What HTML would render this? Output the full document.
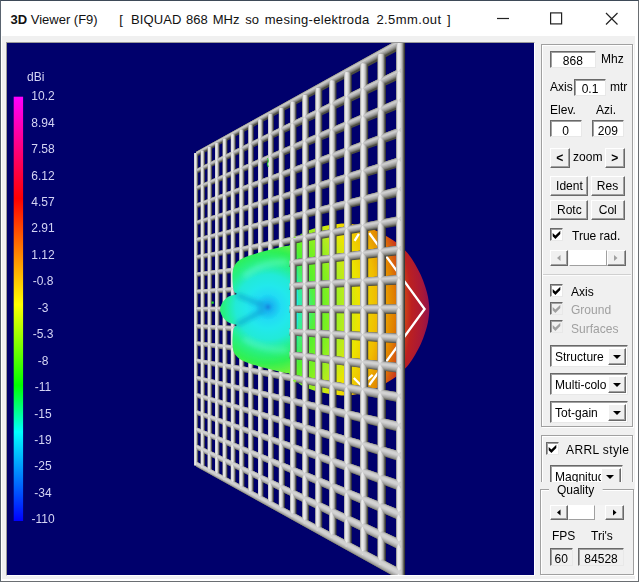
<!DOCTYPE html><html><head><meta charset="utf-8"><title>3D Viewer (F9)</title><style>
*{box-sizing:border-box;margin:0;padding:0}
html,body{width:639px;height:582px;overflow:hidden;background:#fff}
body{position:relative;font-family:"Liberation Sans",sans-serif;font-size:12px;color:#000}
.abs{position:absolute}
#win{position:absolute;left:0;top:0;width:639px;height:582px;border:1px solid #6a6e72;border-top-color:#3e4a58;border-left-color:#5a6470;background:#fff}
#client{position:absolute;left:1px;top:35px;width:633px;height:543px;background:#f0f0f0}
#title{position:absolute;top:9px;left:0;height:20px;line-height:20px;font-size:13px;white-space:pre;color:#111}
#title span{position:absolute;top:0;white-space:pre}
#vp{position:absolute;left:6px;top:42px;width:529px;height:534px;border:1px solid;border-color:#9a9a9a #fff #fff #9a9a9a;background:#00006c;overflow:hidden}
#vp svg{position:absolute;left:-7px;top:-43px}
.lg{position:absolute;color:#d4d4f4;font-size:13px;line-height:14px;height:14px;width:60px;text-align:center;left:13px;white-space:pre;transform:scaleX(.925)}
.frame{position:absolute;border:1px solid #a0a0a0;box-shadow:1px 1px 0 #fff, inset 1px 1px 0 #fff}
.tf{position:absolute;background:#fff;border:1px solid;border-color:#696969 #e8e8e8 #e8e8e8 #696969;box-shadow:inset 1px 1px 0 #a0a0a0;text-align:center;font-size:13px;line-height:15px;padding-top:1px;white-space:pre}
.sx{display:inline-block;transform:scaleX(.925)}
.tf.g{background:#f0f0f0}
.lb{position:absolute;font-size:13px;line-height:14px;height:14px;white-space:pre;transform:scaleX(.925);transform-origin:0 0}
.btn{position:absolute;background:#f0f0f0;border:1px solid;border-color:#fff #696969 #696969 #fff;box-shadow:inset -1px -1px 0 #a0a0a0;text-align:center;font-size:13px;white-space:pre}
.cb{position:absolute;width:13px;height:13px;background:#fff;border:1px solid;border-color:#696969 #e8e8e8 #e8e8e8 #696969;box-shadow:inset 1px 1px 0 #a0a0a0}
.cb.d{background:#f0f0f0}
.cb svg{position:absolute;left:1px;top:1px}
.dis{color:#a0a0a0}
.combo{position:absolute;background:#fff;border:1px solid;border-color:#696969 #e8e8e8 #e8e8e8 #696969;box-shadow:inset 1px 1px 0 #a0a0a0;font-size:12px;white-space:pre;overflow:hidden}
.combo .t{position:absolute;left:4px;top:4px;line-height:14px;font-size:13px;transform:scaleX(.925);transform-origin:0 0}
.combo .b{position:absolute;right:1px;top:2px;bottom:1px;width:18px;background:#f0f0f0;border:1px solid;border-color:#fff #696969 #696969 #fff;box-shadow:inset -1px -1px 0 #a0a0a0}
.combo .b:after{content:"";position:absolute;left:4px;top:6px;border:4px solid transparent;border-top:4px solid #000;border-bottom:0}
.sb{position:absolute;background:#f4f4f4}
.sb .a{position:absolute;top:0;bottom:0;background:#f0f0f0;border:1px solid;border-color:#fff #696969 #696969 #fff;box-shadow:inset -1px -1px 0 #a0a0a0}
.sb .th{position:absolute;top:0;bottom:0;background:#fff;border:1px solid;border-color:#fff #a0a0a0 #a0a0a0 #fff}
</style></head><body>
<div id="win">
<div id="title"><span style="left:9.5px"><b>3D</b> Viewer (F9)</span><span style="left:118.2px">[</span><span style="left:130px;letter-spacing:0.1px">BIQUAD</span><span style="left:185px">868</span><span style="left:211.7px">MHz</span><span style="left:244.3px">so</span><span style="left:263.7px;letter-spacing:0.32px">mesing-elektroda</span><span style="left:375.4px;letter-spacing:0.41px">2.5mm.out</span><span style="left:446px">]</span></div>
<svg class="abs" style="left:478.8px;top:-0.5px" width="158" height="36" viewBox="480 1 158 36"><path d="M497 18.5H509" stroke="#222" stroke-width="1.2"/><rect x="550.6" y="12.9" width="11" height="11" fill="none" stroke="#222" stroke-width="1.2"/><path d="M606 13L617.5 24.5M617.5 13L606 24.5" stroke="#222" stroke-width="1.2"/></svg>
<div id="client"></div>
</div>
<div id="vp">
<svg width="639" height="582" viewBox="0 0 639 582">
<defs><linearGradient id="lgd" x1="0" y1="0" x2="0" y2="1"><stop offset="0" stop-color="#ff00ff"/><stop offset="0.24" stop-color="#ff0000"/><stop offset="0.49" stop-color="#ffff00"/><stop offset="0.68" stop-color="#00ff00"/><stop offset="0.79" stop-color="#00ffff"/><stop offset="1" stop-color="#0000ff"/></linearGradient><radialGradient id="ball" gradientUnits="userSpaceOnUse" cx="200" cy="309.5" r="230"><stop offset="0.43" stop-color="#30e8b0"/><stop offset="0.49" stop-color="#50f030"/><stop offset="0.56" stop-color="#80f020"/><stop offset="0.62" stop-color="#b0ec20"/><stop offset="0.69" stop-color="#ece400"/><stop offset="0.77" stop-color="#f0bc00"/><stop offset="0.845" stop-color="#e08000"/><stop offset="0.885" stop-color="#d04818"/><stop offset="0.92" stop-color="#bc2020"/><stop offset="0.97" stop-color="#a81838"/><stop offset="1" stop-color="#901050"/></radialGradient><radialGradient id="org" gradientUnits="userSpaceOnUse" cx="272" cy="307" r="50"><stop offset="0" stop-color="#20e0e8"/><stop offset="0.5" stop-color="#28e8c0"/><stop offset="0.75" stop-color="#40f080" stop-opacity="0.7"/><stop offset="1" stop-color="#60f040" stop-opacity="0"/></radialGradient><radialGradient id="bk" gradientUnits="userSpaceOnUse" cx="268" cy="307" r="72"><stop offset="0" stop-color="#1488e0"/><stop offset="0.06" stop-color="#18b4f0"/><stop offset="0.18" stop-color="#20dcf4"/><stop offset="0.3" stop-color="#22e8ec"/><stop offset="0.45" stop-color="#22ead8"/><stop offset="0.61" stop-color="#26f088"/><stop offset="0.78" stop-color="#30f052"/><stop offset="1" stop-color="#88f030"/></radialGradient><filter id="b0" x="-2%" y="-2%" width="104%" height="104%"><feGaussianBlur stdDeviation="0.45"/></filter><filter id="b1" x="-10%" y="-10%" width="120%" height="120%"><feGaussianBlur stdDeviation="0.7"/></filter><filter id="b3" x="-30%" y="-30%" width="160%" height="160%"><feGaussianBlur stdDeviation="2.5"/></filter></defs>
<rect x="13.7" y="96.7" width="9.4" height="424.3" fill="url(#lgd)"/>
<path d="M293 252C293.3 231 293.7 244 295 241C296.3 238 298.1 236 301 234C303.9 232 307.7 230.5 312.5 229C317.3 227.5 324.6 225.9 330 225C335.4 224.1 340.3 223.5 345 223.5C349.7 223.5 354.2 224.3 358 225C361.8 225.7 364.6 226.4 368 227.5C371.4 228.6 375.1 230 378.3 231.5C381.5 233 384.2 234.8 387 236.5C389.8 238.2 392.5 239.7 395 241.5C397.5 243.3 399.7 245.3 402 247.5C404.3 249.7 406.5 251.8 408.7 254.5C410.9 257.2 413 260.6 415 264C417 267.4 419.1 271.3 420.8 275C422.5 278.7 423.8 282.3 425 286C426.2 289.7 427.3 293.1 428 297C428.7 300.9 429.3 305.3 429.3 309.5C429.3 313.7 428.7 318.1 428 322C427.3 325.9 426.2 329.3 425 333C423.8 336.7 422.5 340.3 420.8 344C419.1 347.7 417 351.6 415 355C413 358.4 410.9 361.8 408.7 364.5C406.5 367.2 404.3 369.3 402 371.5C399.7 373.7 397.5 375.7 395 377.5C392.5 379.3 389.8 380.8 387 382.5C384.2 384.2 381.5 386 378.3 387.5C375.1 389 371.4 390.4 368 391.5C364.6 392.6 361.8 393.3 358 394C354.2 394.7 349.7 395.5 345 395.5C340.3 395.5 335.4 394.9 330 394C324.6 393.1 317.3 391.5 312.5 390C307.7 388.5 303.9 387 301 385C298.1 383 296.3 381 295 378C293.7 375 293.3 388 293 367C292.7 346 292.7 273 293 252Z" fill="url(#ball)"/>
<path d="M293 252C293.3 231 293.7 244 295 241C296.3 238 298.1 236 301 234C303.9 232 307.7 230.5 312.5 229C317.3 227.5 324.6 225.9 330 225C335.4 224.1 340.3 223.5 345 223.5C349.7 223.5 354.2 224.3 358 225C361.8 225.7 364.6 226.4 368 227.5C371.4 228.6 375.1 230 378.3 231.5C381.5 233 384.2 234.8 387 236.5C389.8 238.2 392.5 239.7 395 241.5C397.5 243.3 399.7 245.3 402 247.5C404.3 249.7 406.5 251.8 408.7 254.5C410.9 257.2 413 260.6 415 264C417 267.4 419.1 271.3 420.8 275C422.5 278.7 423.8 282.3 425 286C426.2 289.7 427.3 293.1 428 297C428.7 300.9 429.3 305.3 429.3 309.5C429.3 313.7 428.7 318.1 428 322C427.3 325.9 426.2 329.3 425 333C423.8 336.7 422.5 340.3 420.8 344C419.1 347.7 417 351.6 415 355C413 358.4 410.9 361.8 408.7 364.5C406.5 367.2 404.3 369.3 402 371.5C399.7 373.7 397.5 375.7 395 377.5C392.5 379.3 389.8 380.8 387 382.5C384.2 384.2 381.5 386 378.3 387.5C375.1 389 371.4 390.4 368 391.5C364.6 392.6 361.8 393.3 358 394C354.2 394.7 349.7 395.5 345 395.5C340.3 395.5 335.4 394.9 330 394C324.6 393.1 317.3 391.5 312.5 390C307.7 388.5 303.9 387 301 385C298.1 383 296.3 381 295 378C293.7 375 293.3 388 293 367C292.7 346 292.7 273 293 252Z" fill="url(#org)"/>
<path d="M369.2 233L424.6 309L369.2 385M354.6 240.8L358.9 233.9M353.8 378L360.7 385L372.7 374.8" stroke="#ffffff" stroke-width="2.3" fill="none" stroke-linejoin="miter"/>
<g id="grid" filter="url(#b0)"><path d="M194.16 153.2H198.16V465.2H194.16ZM200.8 150.77H204.95V467.63H200.8ZM207.76 146.96H212.07V471.44H207.76ZM215.08 142.95H219.56V475.45H215.08ZM222.78 138.74H227.43V479.66H222.78ZM230.89 134.31H235.72V484.09H230.89ZM239.44 129.63H244.47V488.77H239.44ZM248.47 124.68H253.71V493.72H248.47ZM258.03 119.46H263.48V498.94H258.03ZM268.16 113.91H273.84V504.49H268.16ZM278.91 108.03H284.84V510.37H278.91ZM290.34 101.78H296.53V516.62H290.34ZM302.52 95.12H308.98V523.28H302.52ZM315.52 88H322.28V530.4H315.52ZM329.44 80.39H336.52V538.01H329.44ZM344.37 72.22H351.78V546.18H344.37ZM360.42 63.44H368.2V554.96H360.42ZM377.73 53.97H385.9V564.43H377.73ZM396.45 41.15H405.05V577.25H396.45Z" fill="#3e3e38"/>
<path d="M196.16 151.85L400.75 38.25L400.75 49.2L196.16 156.95ZM196.16 169.11L400.75 67.88L400.75 78.57L196.16 174.09ZM196.16 186.37L400.75 97.5L400.75 107.94L196.16 191.23ZM196.16 203.62L400.75 127.1L400.75 137.34L196.16 208.38ZM196.16 220.86L400.75 156.69L400.75 166.74L196.16 225.54ZM196.16 238.1L400.75 186.26L400.75 196.16L196.16 242.7ZM196.16 255.32L400.75 215.81L400.75 225.6L196.16 259.88ZM196.16 272.54L400.75 245.36L400.75 255.06L196.16 277.06ZM196.16 289.76L400.75 274.88L400.75 284.53L196.16 294.24ZM196.16 306.96L400.75 304.38L400.75 314.02L196.16 311.44ZM196.16 324.16L400.75 333.87L400.75 343.52L196.16 328.64ZM196.16 341.34L400.75 363.34L400.75 373.04L196.16 345.86ZM196.16 358.52L400.75 392.8L400.75 402.59L196.16 363.08ZM196.16 375.7L400.75 422.24L400.75 432.14L196.16 380.3ZM196.16 392.86L400.75 451.66L400.75 461.71L196.16 397.54ZM196.16 410.02L400.75 481.06L400.75 491.3L196.16 414.78ZM196.16 427.17L400.75 510.46L400.75 520.9L196.16 432.03ZM196.16 444.31L400.75 539.83L400.75 550.52L196.16 449.29ZM196.16 461.45L400.75 569.2L400.75 580.15L196.16 466.55Z" fill="#4a4a40"/>
<path d="M194.16 153.2H197.64V465.2H194.16ZM200.8 150.77H204.41V467.63H200.8ZM207.76 146.96H211.51V471.44H207.76ZM215.08 142.95H218.98V475.45H215.08ZM222.78 138.74H226.83V479.66H222.78ZM230.89 134.31H235.1V484.09H230.89ZM239.44 129.63H243.82V488.77H239.44ZM248.47 124.68H253.03V493.72H248.47ZM258.03 119.46H262.78V498.94H258.03ZM268.16 113.91H273.1V504.49H268.16ZM278.91 108.03H284.06V510.37H278.91ZM290.34 101.78H295.72V516.62H290.34ZM302.52 95.12H308.14V523.28H302.52ZM315.52 88H321.4V530.4H315.52ZM329.44 80.39H335.6V538.01H329.44ZM344.37 72.22H350.82V546.18H344.37ZM360.42 63.44H367.19V554.96H360.42ZM377.73 53.97H384.84V564.43H377.73ZM396.45 41.15H403.93V577.25H396.45Z" fill="#6a6a64"/>
<path d="M196.16 151.85L400.75 38.25L400.75 46.38L196.16 155.63ZM196.16 169.11L400.75 67.88L400.75 76.04L196.16 172.91ZM196.16 186.37L400.75 97.5L400.75 105.69L196.16 190.18ZM196.16 203.62L400.75 127.1L400.75 135.35L196.16 207.46ZM196.16 220.86L400.75 156.69L400.75 165L196.16 224.73ZM196.16 238.1L400.75 186.26L400.75 194.66L196.16 242ZM196.16 255.32L400.75 215.81L400.75 224.32L196.16 259.28ZM196.16 272.54L400.75 245.36L400.75 253.99L196.16 276.56ZM196.16 289.76L400.75 274.88L400.75 283.67L196.16 293.85ZM196.16 306.96L400.75 304.38L400.75 313.36L196.16 311.14ZM196.16 324.16L400.75 333.87L400.75 343.07L196.16 328.43ZM196.16 341.34L400.75 363.34L400.75 372.8L196.16 345.74ZM196.16 358.52L400.75 392.8L400.75 402.44L196.16 363.01ZM196.16 375.7L400.75 422.24L400.75 431.99L196.16 380.23ZM196.16 392.86L400.75 451.66L400.75 461.56L196.16 397.47ZM196.16 410.02L400.75 481.06L400.75 491.15L196.16 414.71ZM196.16 427.17L400.75 510.46L400.75 520.75L196.16 431.96ZM196.16 444.31L400.75 539.83L400.75 550.36L196.16 449.21ZM196.16 461.45L400.75 569.2L400.75 579.99L196.16 466.47Z" fill="#6e6e68"/>
<path d="M194.16 153.2H197.24V465.2H194.16ZM200.8 150.77H203.99V467.63H200.8ZM207.76 146.96H211.08V471.44H207.76ZM215.08 142.95H218.53V475.45H215.08ZM222.78 138.74H226.36V479.66H222.78ZM230.89 134.31H234.61V484.09H230.89ZM239.44 129.63H243.31V488.77H239.44ZM248.47 124.68H252.51V493.72H248.47ZM258.03 119.46H262.23V498.94H258.03ZM268.16 113.91H272.53V504.49H268.16ZM278.91 108.03H283.47V510.37H278.91ZM290.34 101.78H295.1V516.62H290.34ZM302.52 95.12H307.5V523.28H302.52ZM315.52 88H320.73V530.4H315.52ZM329.44 80.39H334.89V538.01H329.44ZM344.37 72.22H350.08V546.18H344.37ZM360.42 63.44H366.41V554.96H360.42ZM377.73 53.97H384.02V564.43H377.73ZM396.45 41.15H403.07V577.25H396.45Z" fill="#94948f"/>
<path d="M196.16 151.85L400.75 38.25L400.75 45.17L196.16 155.07ZM196.16 169.11L400.75 67.88L400.75 74.86L196.16 172.36ZM196.16 186.37L400.75 97.5L400.75 104.54L196.16 189.65ZM196.16 203.62L400.75 127.1L400.75 134.22L196.16 206.93ZM196.16 220.86L400.75 156.69L400.75 163.89L196.16 224.21ZM196.16 238.1L400.75 186.26L400.75 193.57L196.16 241.5ZM196.16 255.32L400.75 215.81L400.75 223.24L196.16 258.78ZM196.16 272.54L400.75 245.36L400.75 252.92L196.16 276.06ZM196.16 289.76L400.75 274.88L400.75 282.61L196.16 293.35ZM196.16 306.96L400.75 304.38L400.75 312.3L196.16 310.64ZM196.16 324.16L400.75 333.87L400.75 342.01L196.16 327.94ZM196.16 341.34L400.75 363.34L400.75 371.73L196.16 345.24ZM196.16 358.52L400.75 392.8L400.75 401.46L196.16 362.56ZM196.16 375.7L400.75 422.24L400.75 431.22L196.16 379.87ZM196.16 392.86L400.75 451.66L400.75 460.99L196.16 397.2ZM196.16 410.02L400.75 481.06L400.75 490.78L196.16 414.54ZM196.16 427.17L400.75 510.46L400.75 520.59L196.16 431.88ZM196.16 444.31L400.75 539.83L400.75 550.36L196.16 449.21ZM196.16 461.45L400.75 569.2L400.75 579.99L196.16 466.47Z" fill="#8c8c86"/>
<path d="M194.16 153.2H196.84V465.2H194.16ZM200.8 150.77H203.58V467.63H200.8ZM207.76 146.96H210.65V471.44H207.76ZM215.08 142.95H218.08V475.45H215.08ZM222.78 138.74H225.9V479.66H222.78ZM230.89 134.31H234.13V484.09H230.89ZM239.44 129.63H242.81V488.77H239.44ZM248.47 124.68H251.98V493.72H248.47ZM258.03 119.46H261.68V498.94H258.03ZM268.16 113.91H271.97V504.49H268.16ZM278.91 108.03H282.88V510.37H278.91ZM290.34 101.78H294.48V516.62H290.34ZM302.52 95.12H306.85V523.28H302.52ZM315.52 88H320.05V530.4H315.52ZM329.44 80.39H334.18V538.01H329.44ZM344.37 72.22H349.34V546.18H344.37ZM360.42 63.44H365.63V554.96H360.42ZM377.73 53.97H383.21V564.43H377.73ZM396.45 41.15H402.21V577.25H396.45Z" fill="#bcbcba"/>
<path d="M196.16 151.93L400.75 38.41L400.75 43.97L196.16 154.51ZM196.16 169.19L400.75 68.04L400.75 73.69L196.16 171.82ZM196.16 186.44L400.75 97.65L400.75 103.39L196.16 189.11ZM196.16 203.69L400.75 127.25L400.75 133.09L196.16 206.41ZM196.16 220.93L400.75 156.84L400.75 162.79L196.16 223.7ZM196.16 238.17L400.75 186.41L400.75 192.48L196.16 240.99ZM196.16 255.39L400.75 215.96L400.75 222.17L196.16 258.28ZM196.16 272.61L400.75 245.5L400.75 251.85L196.16 275.57ZM196.16 289.82L400.75 275.02L400.75 281.55L196.16 292.86ZM196.16 307.03L400.75 304.53L400.75 311.24L196.16 310.15ZM196.16 324.22L400.75 334.02L400.75 340.95L196.16 327.45ZM196.16 341.41L400.75 363.49L400.75 370.66L196.16 344.75ZM196.16 358.59L400.75 392.94L400.75 400.39L196.16 362.05ZM196.16 375.77L400.75 422.38L400.75 430.13L196.16 379.37ZM196.16 392.93L400.75 451.81L400.75 459.88L196.16 396.69ZM196.16 410.09L400.75 481.22L400.75 489.65L196.16 414.01ZM196.16 427.24L400.75 510.61L400.75 519.44L196.16 431.35ZM196.16 444.39L400.75 539.99L400.75 549.25L196.16 448.69ZM196.16 461.53L400.75 569.36L400.75 579.08L196.16 466.05Z" fill="#a4a4a2"/>
<path d="M194.32 153.2H196.36V465.2H194.32ZM200.96 150.77H203.08V467.63H200.96ZM207.94 146.96H210.13V471.44H207.94ZM215.26 142.95H217.54V475.45H215.26ZM222.97 138.74H225.34V479.66H222.97ZM231.08 134.31H233.55V484.09H231.08ZM239.64 129.63H242.21V488.77H239.64ZM248.68 124.68H251.35V493.72H248.68ZM258.25 119.46H261.03V498.94H258.25ZM268.39 113.91H271.28V504.49H268.39ZM279.14 108.03H282.17V510.37H279.14ZM290.59 101.78H293.74V516.62H290.59ZM302.78 95.12H306.07V523.28H302.78ZM315.79 88H319.24V530.4H315.79ZM329.72 80.39H333.33V538.01H329.72ZM344.66 72.22H348.45V546.18H344.66ZM360.73 63.44H364.7V554.96H360.73ZM378.06 53.97H382.23V564.43H378.06ZM396.79 41.15H401.18V577.25H396.79Z" fill="#d6d6d6"/>
<path d="M196.16 152.16L400.75 38.91L400.75 42.66L196.16 153.9ZM196.16 169.41L400.75 68.52L400.75 72.4L196.16 171.22ZM196.16 186.66L400.75 98.12L400.75 102.14L196.16 188.53ZM196.16 203.9L400.75 127.71L400.75 131.86L196.16 205.84ZM196.16 221.14L400.75 157.29L400.75 161.58L196.16 223.14ZM196.16 238.37L400.75 186.85L400.75 191.29L196.16 240.44ZM196.16 255.6L400.75 216.4L400.75 220.99L196.16 257.73ZM196.16 272.81L400.75 245.94L400.75 250.69L196.16 275.03ZM196.16 290.03L400.75 275.46L400.75 280.39L196.16 292.32ZM196.16 307.23L400.75 304.96L400.75 310.09L196.16 309.61ZM196.16 324.43L400.75 334.45L400.75 339.79L196.16 326.91ZM196.16 341.61L400.75 363.93L400.75 369.5L196.16 344.21ZM196.16 358.8L400.75 393.38L400.75 399.21L196.16 361.51ZM196.16 375.97L400.75 422.83L400.75 428.94L196.16 378.81ZM196.16 393.14L400.75 452.26L400.75 458.67L196.16 396.13ZM196.16 410.3L400.75 481.68L400.75 488.42L196.16 413.44ZM196.16 427.46L400.75 511.08L400.75 518.19L196.16 430.77ZM196.16 444.61L400.75 540.47L400.75 547.97L196.16 448.1ZM196.16 461.76L400.75 569.86L400.75 577.76L196.16 465.44Z" fill="#b8b8b8"/>
<path d="M194.6 153.2H195.92V465.2H194.6ZM201.25 150.77H202.62V467.63H201.25ZM208.24 146.96H209.66V471.44H208.24ZM215.57 142.95H217.05V475.45H215.57ZM223.29 138.74H224.83V479.66H223.29ZM231.42 134.31H233.02V484.09H231.42ZM239.99 129.63H241.65V488.77H239.99ZM249.05 124.68H250.78V493.72H249.05ZM258.63 119.46H260.43V498.94H258.63ZM268.78 113.91H270.66V504.49H268.78ZM279.56 108.03H281.52V510.37H279.56ZM291.02 101.78H293.06V516.62H291.02ZM303.23 95.12H305.36V523.28H303.23ZM316.27 88H318.5V530.4H316.27ZM330.22 80.39H332.55V538.01H330.22ZM345.18 72.22H347.63V546.18H345.18ZM361.28 63.44H363.84V554.96H361.28ZM378.63 53.97H381.33V564.43H378.63ZM397.4 41.15H400.23V577.25H397.4Z" fill="#e4e4e4"/>
<path d="M196.16 152.52L400.75 39.67L400.75 41.34L196.16 153.29ZM196.16 169.76L400.75 69.27L400.75 71.12L196.16 170.62ZM196.16 187L400.75 98.85L400.75 100.89L196.16 187.95ZM196.16 204.24L400.75 128.43L400.75 130.64L196.16 205.26ZM196.16 221.47L400.75 157.99L400.75 160.37L196.16 222.58ZM196.16 238.7L400.75 187.55L400.75 190.1L196.16 239.88ZM196.16 255.92L400.75 217.09L400.75 219.82L196.16 257.19ZM196.16 273.13L400.75 246.62L400.75 249.53L196.16 274.48ZM196.16 290.34L400.75 276.13L400.75 279.23L196.16 291.78ZM196.16 307.54L400.75 305.64L400.75 308.93L196.16 309.08ZM196.16 324.74L400.75 335.13L400.75 338.63L196.16 326.37ZM196.16 341.93L400.75 364.6L400.75 368.33L196.16 343.67ZM196.16 359.12L400.75 394.07L400.75 398.04L196.16 360.96ZM196.16 376.3L400.75 423.52L400.75 427.75L196.16 378.26ZM196.16 393.47L400.75 452.96L400.75 457.47L196.16 395.56ZM196.16 410.64L400.75 482.39L400.75 487.2L196.16 412.87ZM196.16 427.8L400.75 511.81L400.75 516.93L196.16 430.18ZM196.16 444.96L400.75 541.22L400.75 546.69L196.16 447.5ZM196.16 462.12L400.75 570.62L400.75 576.45L196.16 464.83Z" fill="#c8c8c8"/>
<path d="M194.96 153.2H195.52V465.2H194.96ZM201.63 150.77H202.21V467.63H201.63ZM208.63 146.96H209.23V471.44H208.63ZM215.98 142.95H216.6V475.45H215.98ZM223.71 138.74H224.36V479.66H223.71ZM231.86 134.31H232.53V484.09H231.86ZM240.45 129.63H241.15V488.77H240.45ZM249.52 124.68H250.25V493.72H249.52ZM259.12 119.46H259.89V498.94H259.12ZM269.3 113.91H270.09V504.49H269.3ZM280.09 108.03H280.92V510.37H280.09ZM291.58 101.78H292.44V516.62H291.58ZM303.81 95.12H304.72V523.28H303.81ZM316.88 88H317.82V530.4H316.88ZM330.86 80.39H331.85V538.01H330.86ZM345.85 72.22H346.89V546.18H345.85ZM361.98 63.44H363.06V554.96H361.98ZM379.36 53.97H380.51V564.43H379.36ZM398.17 41.15H399.37V577.25H398.17Z" fill="#ececec"/>
<path d="M196.16 152.92L400.75 40.55L400.75 40.99L196.16 153.13ZM196.16 170.16L400.75 70.12L400.75 70.55L196.16 170.36ZM196.16 187.39L400.75 99.69L400.75 100.11L196.16 187.58ZM196.16 204.62L400.75 129.25L400.75 129.66L196.16 204.81ZM196.16 221.84L400.75 158.8L400.75 159.37L196.16 222.11ZM196.16 239.06L400.75 188.34L400.75 189.11L196.16 239.42ZM196.16 256.28L400.75 217.87L400.75 218.84L196.16 256.73ZM196.16 273.49L400.75 247.39L400.75 248.56L196.16 274.03ZM196.16 290.7L400.75 276.9L400.75 278.27L196.16 291.33ZM196.16 307.9L400.75 306.41L400.75 307.97L196.16 308.63ZM196.16 325.1L400.75 335.9L400.75 337.67L196.16 325.92ZM196.16 342.29L400.75 365.38L400.75 367.36L196.16 343.21ZM196.16 359.48L400.75 394.85L400.75 397.06L196.16 360.51ZM196.16 376.66L400.75 424.32L400.75 426.76L196.16 377.8ZM196.16 393.84L400.75 453.77L400.75 456.46L196.16 395.1ZM196.16 411.02L400.75 483.21L400.75 486.17L196.16 412.39ZM196.16 428.19L400.75 512.65L400.75 515.89L196.16 429.7ZM196.16 445.36L400.75 542.08L400.75 545.62L196.16 447ZM196.16 462.52L400.75 571.5L400.75 575.36L196.16 464.32Z" fill="#d2d2d2"/></g>
<g filter="url(#b1)"><path d="M297 246C295.6 224.8 291.9 245.5 288.6 245.8C285.3 246.2 282 246.9 277 248.1C272 249.3 264.2 251.1 258.4 252.8C252.6 254.6 246.1 256.7 242.2 258.6C238.3 260.5 236.8 262.1 235.2 264.4C233.6 266.7 233 268.8 232.6 272.5C232.2 276.2 232.6 283.1 232.9 286.4C233.2 289.6 233.9 290.7 234.5 292C235.1 293.3 237.5 293.4 236.4 294.2C235.3 295 230.5 295.4 228.2 296.8C225.9 298.2 223.8 300.5 222.4 302.6C221.1 304.7 220.1 307.2 220.1 309.5C220.1 311.8 221.1 314.3 222.4 316.4C223.8 318.5 225.9 320.8 228.2 322.2C230.5 323.6 235.3 324 236.4 324.8C237.5 325.6 235.1 325.7 234.5 327C233.9 328.3 233.2 329.4 232.9 332.6C232.6 335.9 232.2 342.8 232.6 346.5C233 350.2 233.6 352.3 235.2 354.6C236.8 356.9 238.3 358.5 242.2 360.4C246.1 362.3 252.6 364.4 258.4 366.2C264.2 367.9 272 369.7 277 370.9C282 372.1 285.3 372.8 288.6 373.2C291.9 373.6 295.6 394.2 297 373C298.4 351.8 298.4 267.2 297 246Z" fill="url(#bk)"/><g filter="url(#b3)" fill="none" stroke-linecap="round"><path d="M238 295.5L262 305" stroke="#0878c0" stroke-width="4" opacity="0.55"/><path d="M238 324L262 311" stroke="#0878c0" stroke-width="4" opacity="0.55"/><path d="M246 275Q262 262 285 262" stroke="#80ffe0" stroke-width="6" opacity="0.35"/><path d="M246 340Q262 350 285 350" stroke="#80ffe0" stroke-width="6" opacity="0.3"/></g></g>
<clipPath id="strip"><rect x="289.5" y="238" width="10" height="142"/></clipPath><use href="#grid" clip-path="url(#strip)"/>
<path d="M211.5 301.5h2.2v2.2h-2.2z" fill="#20e020"/><path d="M267.5 158l1 3-1.2 3 1 3" stroke="#30d030" stroke-width="1" fill="none"/>
</svg>
<div class="lg" style="left:20.3px;top:26.799999999999997px;width:auto;text-align:left;transform-origin:0 0">dBi</div>
<div class="lg" style="left:6px;top:46.2px">10.2</div>
<div class="lg" style="left:6px;top:72.6px">8.94</div>
<div class="lg" style="left:6px;top:99.1px">7.58</div>
<div class="lg" style="left:6px;top:125.5px">6.12</div>
<div class="lg" style="left:6px;top:152.0px">4.57</div>
<div class="lg" style="left:6px;top:178.4px">2.91</div>
<div class="lg" style="left:6px;top:204.8px">1.12</div>
<div class="lg" style="left:6px;top:231.3px">-0.8</div>
<div class="lg" style="left:6px;top:257.7px">-3</div>
<div class="lg" style="left:6px;top:284.2px">-5.3</div>
<div class="lg" style="left:6px;top:310.6px">-8</div>
<div class="lg" style="left:6px;top:337.0px">-11</div>
<div class="lg" style="left:6px;top:363.5px">-15</div>
<div class="lg" style="left:6px;top:389.9px">-19</div>
<div class="lg" style="left:6px;top:416.4px">-25</div>
<div class="lg" style="left:6px;top:442.8px">-34</div>
<div class="lg" style="left:6px;top:469.2px">-110</div>
</div>
<div class="frame" style="left:541px;top:44px;width:92px;height:383px"></div>
<div class="frame" style="left:541px;top:435px;width:92px;height:60px"></div>
<div class="abs" style="left:543px;top:274px;width:88px;height:2px;border-top:1px solid #d0d0d0;border-bottom:1px solid #fcfcfc"></div>
<div class="tf" style="left:550px;top:51px;width:46px;height:17px"><span class="sx">868</span></div>
<div class="lb" style="left:601px;top:52px">Mhz</div>
<div class="lb" style="left:550px;top:80px">Axis</div>
<div class="tf" style="left:574px;top:79px;width:32px;height:17px"><span class="sx">0.1</span></div>
<div class="lb" style="left:610px;top:80px">mtr</div>
<div class="lb" style="left:550px;top:103px">Elev.</div>
<div class="lb" style="left:596px;top:103px">Azi.</div>
<div class="tf" style="left:550px;top:120px;width:32px;height:17px;padding-top:2px"><span class="sx">0</span></div>
<div class="tf" style="left:592px;top:120px;width:32px;height:17px;padding-top:2px"><span class="sx">209</span></div>
<div class="btn" style="left:550px;top:148px;width:20px;height:20px;line-height:17px;font-weight:bold"><span class="sx">&lt;</span></div>
<div class="lb" style="left:573px;top:150px">zoom</div>
<div class="btn" style="left:605px;top:148px;width:20px;height:20px;line-height:17px;font-weight:bold"><span class="sx">&gt;</span></div>
<div class="btn" style="left:550px;top:176px;width:38px;height:20px;line-height:17px"><span class="sx">Ident</span></div>
<div class="btn" style="left:591px;top:176px;width:34px;height:20px;line-height:17px"><span class="sx">Res</span></div>
<div class="btn" style="left:550px;top:200px;width:38px;height:20px;line-height:17px"><span class="sx">Rotc</span></div>
<div class="btn" style="left:591px;top:200px;width:34px;height:20px;line-height:17px"><span class="sx">Col</span></div>
<div class="cb" style="left:550px;top:228px"><svg width="9" height="9" viewBox="0 0 9 9"><path d="M0.7 2.9L3.4 5.6L8.3 0.7V4L3.4 8.9L0.7 6.2Z" fill="#000"/></svg></div>
<div class="lb" style="left:572px;top:229px">True rad.</div>
<div class="sb" style="left:550px;top:250px;width:76px;height:16px"><div class="a" style="left:0;width:18px"></div><div class="th" style="left:19px;width:38px"></div><div class="a" style="right:0;width:19px"></div><svg class="abs" style="left:0;top:0" width="76" height="16"><path d="M10.5 5V11L7 8Z" fill="#a0a0a0"/><path d="M64 5V11L67.5 8Z" fill="#a0a0a0"/></svg></div>
<div class="cb" style="left:550px;top:284px"><svg width="9" height="9" viewBox="0 0 9 9"><path d="M0.7 2.9L3.4 5.6L8.3 0.7V4L3.4 8.9L0.7 6.2Z" fill="#000"/></svg></div>
<div class="lb" style="left:571px;top:285px">Axis</div>
<div class="cb d" style="left:550px;top:302px"><svg width="9" height="9" viewBox="0 0 9 9"><path d="M0.7 2.9L3.4 5.6L8.3 0.7V4L3.4 8.9L0.7 6.2Z" fill="#a0a0a0"/></svg></div>
<div class="lb dis" style="left:571px;top:303px">Ground</div>
<div class="cb d" style="left:550px;top:320px"><svg width="9" height="9" viewBox="0 0 9 9"><path d="M0.7 2.9L3.4 5.6L8.3 0.7V4L3.4 8.9L0.7 6.2Z" fill="#a0a0a0"/></svg></div>
<div class="lb dis" style="left:571px;top:322px">Surfaces</div>
<div class="combo" style="left:550px;top:345px;width:78px;height:22px"><div class="t">Structure</div><div class="b"></div></div>
<div class="combo" style="left:550px;top:373px;width:78px;height:22px"><div class="t">Multi-colo</div><div class="b"></div></div>
<div class="combo" style="left:550px;top:401px;width:78px;height:22px"><div class="t">Tot-gain</div><div class="b"></div></div>
<div class="cb" style="left:546px;top:442px"><svg width="9" height="9" viewBox="0 0 9 9"><path d="M0.7 2.9L3.4 5.6L8.3 0.7V4L3.4 8.9L0.7 6.2Z" fill="#000"/></svg></div>
<div class="lb" style="left:566px;top:443px;letter-spacing:0.4px">ARRL style</div>
<div class="combo" style="left:550px;top:465px;width:73px;height:22px"><div class="t">Magnitude</div><div class="b" style="width:20px"></div></div>
<div class="abs" style="left:538px;top:482px;width:97px;height:94px;background:#f0f0f0"></div>
<div class="frame" style="left:540px;top:489px;width:94px;height:86px"></div>
<div class="lb" style="left:549px;top:483px;background:#f0f0f0;padding:0 9px 0 8.6px">Quality</div>
<div class="sb" style="left:550px;top:505px;width:74px;height:15px"><div class="a" style="left:0;width:18px"></div><div class="th" style="left:18px;width:27px"></div><div class="a" style="right:0;width:19px"></div><svg class="abs" style="left:0;top:0" width="74" height="15"><path d="M10.5 4.5V10.5L7 7.5Z" fill="#000"/><path d="M63 4.5V10.5L66.5 7.5Z" fill="#000"/></svg></div>
<div class="lb" style="left:552px;top:529px">FPS</div>
<div class="lb" style="left:591px;top:529px">Tri's</div>
<div class="tf g" style="left:550px;top:548px;width:23px;height:18px;line-height:15px;padding-top:2px"><span class="sx">60</span></div>
<div class="tf g" style="left:578px;top:548px;width:46px;height:18px;line-height:15px;padding-top:2px"><span class="sx">84528</span></div>
</body></html>
